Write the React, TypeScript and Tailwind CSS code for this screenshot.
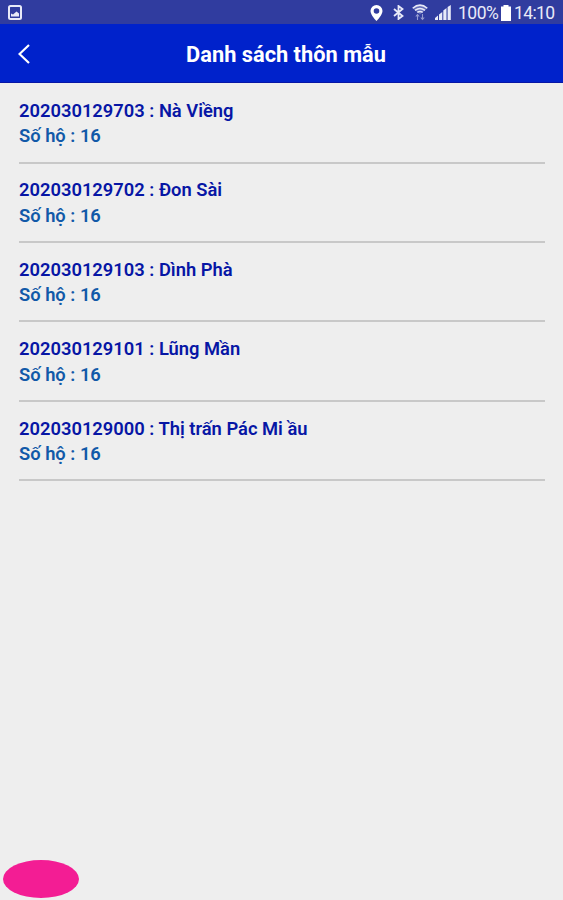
interface Village {
  code: string;
  name: string;
  households: number;
}

const villages: Village[] = [
  { code: "202030129703", name: "Nà Viềng", households: 16 },
  { code: "202030129702", name: "Đon Sài", households: 16 },
  { code: "202030129103", name: "Dình Phà", households: 16 },
  { code: "202030129101", name: "Lũng Mần", households: 16 },
  { code: "202030129000", name: "Thị trấn Pác Mi ầu", households: 16 },
];

const StatusBar = () => (
  <div className="flex h-6 shrink-0 items-center justify-between bg-[#303c9f] pt-px pr-[9px] pl-2 text-[#e8eaf8]">
    <svg className="h-[15px] w-[14px]" viewBox="0 0 14 15" fill="none">
      <rect x="1" y="1" width="12" height="13" rx="1.5" stroke="currentColor" strokeWidth="2" />
      <path d="M3 11.5V8.5l2 1 3.500-3 2.500 2v3z" fill="currentColor" />
    </svg>
    <div className="flex items-center">
      {/* Location */}
      <svg className="mr-[10px] h-4 w-[13px]" viewBox="0 0 13 16" fill="none">
        <path
          fillRule="evenodd"
          d="M6.500 0A6 6 0 0 0 .5 6c0 4 6 10 6 10s6-6 6-10a6 6 0 0 0-6-6zm0 3.200a2.800 2.800 0 1 1 0 5.600 2.800 2.800 0 0 1 0-5.600z"
          fill="white"
        />
      </svg>
      {/* Bluetooth */}
      <svg className="mr-2 h-[15px] w-[11px]" viewBox="0 0 11 15" fill="none">
        <path d="M1 4l8.500 7L5.500 14V1l4 3L1 11" stroke="currentColor" strokeWidth="1.800" />
      </svg>
      {/* Wifi with traffic arrows */}
      <svg className="mr-[7px] h-[17px] w-4" viewBox="0 0 16 17" fill="none">
        <path d="M.7 4.300Q8-2 15.300 4.300L8 10.500z" fill="currentColor" fillOpacity=".3" />
        <path d="M.7 4.300Q8-2 15.300 4.300M3 6.300Q8 2.500 13 6.300M5.300 8.300Q8 6.500 10.700 8.300" stroke="currentColor" strokeWidth="1.500" />
        <path d="M5.500 16v-5.500M3.800 12.500l1.700-2 1.700 2M10.500 10v5.500M8.800 13.500l1.700 2 1.700-2" stroke="currentColor" strokeOpacity=".55" strokeWidth="1.100" />
      </svg>
      {/* Signal */}
      <svg className="mr-[7px] h-[15px] w-4" viewBox="0 0 16 15" fill="currentColor">
        <path d="M0 15v-2l3-2.500V15zM4 15V9.500L7.300 7v8zM8.300 15V5.500l3.200-2.500v12zM12.600 15V2L15.800 0v15z" />
      </svg>
      <span className="w-10 text-[17.5px] leading-6 tracking-[-0.5px] whitespace-nowrap">100%</span>
      <svg className="mr-[3px] ml-[3px] h-4 w-[10px]" viewBox="0 0 10 16" fill="white">
        <path d="M2.500 0h5v1.500H10V16H0V1.500h2.500z" />
      </svg>
      <span className="w-[40px] text-[17.5px] leading-6 tracking-[-0.6px] whitespace-nowrap">14:10</span>
    </div>
  </div>
);

const Header = () => (
  <header className="grid h-[59px] shrink-0 grid-cols-[46px_1fr_37px] items-center border-b border-[#0716a5] bg-[#0022cb] text-white">
    <button type="button" aria-label="Quay lại" className="pt-px pl-[18px]">
      <svg className="h-5 w-3" viewBox="0 0 12 20" fill="none">
        <path d="M11 1L1.500 10l9.500 9" stroke="currentColor" strokeWidth="2.200" />
      </svg>
    </button>
    <h1 className="pt-[3px] text-center text-[21.8px] leading-8 font-bold">Danh sách thôn mẫu</h1>
  </header>
);

const VillageRow = ({ village }: { village: Village }) => (
  <li className="h-[79.4px] border-b-2 border-[#c8c8c8] pt-[13.8px] text-[18.35px] leading-[25.5px] font-semibold">
    <p className="text-[#0716a5]">
      {village.code} : {village.name}
    </p>
    <p className="text-[#1159a8]">Số hộ : {village.households}</p>
  </li>
);

export default function App() {
  return (
    <div className="flex h-screen flex-col bg-[#eeeeee] font-['Roboto',sans-serif]">
      <StatusBar />
      <Header />
      <ul className="flex-1 pt-[1.2px] pr-[18px] pl-[19px]">
        {villages.map((village) => (
          <VillageRow key={village.code} village={village} />
        ))}
      </ul>
      <div className="mb-[2px] ml-[3px] h-[38px] w-[76px] shrink-0 rounded-[50%] bg-[#f31d94]" />
    </div>
  );
}
